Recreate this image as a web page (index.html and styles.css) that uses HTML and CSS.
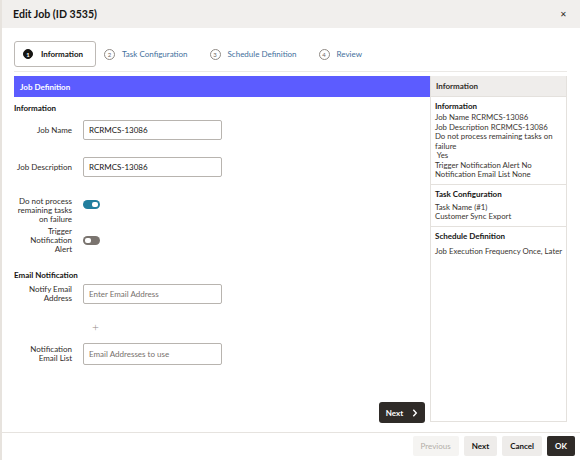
FILE: index.html
```html
<!DOCTYPE html>
<html>
<head>
<meta charset="utf-8">
<link rel="stylesheet" href="styles.css">
</head>
<body>
<div class="dialog">
  <header class="dlg-header">
    <h1 class="dlg-title">Edit Job (ID 3535)</h1>
    <span class="close">&#x2715;</span>
  </header>
  <div class="dlg-body">
    <nav class="train">
      <div class="step active"><span class="num">1</span><span class="step-label">Information</span></div>
      <div class="step"><span class="num">2</span><span class="step-label">Task Configuration</span></div>
      <div class="step"><span class="num">3</span><span class="step-label">Schedule Definition</span></div>
      <div class="step"><span class="num">4</span><span class="step-label">Review</span></div>
    </nav>
    <div class="content">
      <section class="main">
        <div class="bar">Job Definition</div>
        <div class="form">
          <div class="sub">Information</div>
          <div class="row row-input r1">
            <label class="lbl">Job Name</label>
            <div class="input">RCRMCS-13086</div>
          </div>
          <div class="row row-input r2">
            <label class="lbl">Job Description</label>
            <div class="input">RCRMCS-13086</div>
          </div>
          <div class="row row-toggle r3">
            <label class="lbl">Do not process remaining tasks on failure</label>
            <div class="toggle on"><span class="knob"></span></div>
          </div>
          <div class="row row-toggle r4">
            <label class="lbl">Trigger Notification Alert</label>
            <div class="toggle off"><span class="knob"></span></div>
          </div>
          <div class="sub sub2">Email Notification</div>
          <div class="row row-input r5">
            <label class="lbl">Notify Email Address</label>
            <div class="input ph">Enter Email Address</div>
          </div>
          <div class="row r6">
            <span></span>
            <span class="plus">+</span>
          </div>
          <div class="row row-input r7">
            <label class="lbl">Notification Email List</label>
            <div class="input ph tall">Email Addresses to use</div>
          </div>
        </div>
        <div class="actions">
          <button class="btn-next">Next
            <svg width="6" height="8" viewBox="0 0 6 8"><path d="M1.3 0.8 L4.3 4 L1.3 7.2" fill="none" stroke="#fff" stroke-width="1.4"/></svg>
          </button>
        </div>
      </section>
      <aside class="summary">
        <div class="sum-head">Information</div>
        <div class="sum-sec">
          <div class="sum-title">Information</div>
          <div class="sum-text">Job Name RCRMCS-13086<br>Job Description RCRMCS-13086<br>Do not process remaining tasks on failure<br>&nbsp;Yes<br>Trigger Notification Alert No<br>Notification Email List None</div>
        </div>
        <div class="sum-sec">
          <div class="sum-title">Task Configuration</div>
          <div class="sum-text">Task Name (#1)<br>Customer Sync Export</div>
        </div>
        <div class="sum-sec last">
          <div class="sum-title">Schedule Definition</div>
          <div class="sum-text">Job Execution Frequency Once, Later</div>
        </div>
      </aside>
    </div>
  </div>
  <footer class="dlg-footer">
    <button class="fbtn disabled">Previous</button>
    <button class="fbtn">Next</button>
    <button class="fbtn">Cancel</button>
    <button class="fbtn primary">OK</button>
  </footer>
</div>
</body>
</html>
```
FILE: styles.css
```css
* { box-sizing: border-box; }
html, body { margin: 0; padding: 0; }
body {
  font-family: Lato, "Noto Sans", sans-serif;
  color: #312d2a;
  background: #fff;
  width: 580px;
  height: 460px;
  overflow: hidden;
  font-size: 8px;
}
.dialog {
  display: flex;
  flex-direction: column;
  height: 460px;
  border-left: 2px solid #e7e3de;
}
.dlg-header {
  height: 28px;
  flex: none;
  background: #f1efed;
  display: flex;
  align-items: center;
  justify-content: space-between;
  padding: 0 13px 0 11px;
}
.dlg-title {
  margin: 0;
  font-size: 10.6px;
  font-weight: 700;
  color: #161513;
}
.close { font-size: 8px; color: #312d2a; }
.dlg-body {
  flex: 1;
  display: flex;
  flex-direction: column;
  padding: 13px 13px 10px 12px;
}
.train {
  display: flex;
  align-items: center;
  padding-bottom: 4px;
  border-bottom: 1px solid #ebe9e6;
}
.step {
  display: flex;
  align-items: center;
  height: 26px;
  padding: 0 11px 0 8px;
  gap: 7px;
  color: #3f6f9c;
  font-size: 8px;
  margin-right: 3px;
}
.step .num {
  width: 11px;
  height: 11px;
  border: 1px solid #8f8a85;
  border-radius: 50%;
  display: flex;
  align-items: center;
  justify-content: center;
  font-size: 6px;
  color: #6d6863;
}
.step.active {
  border: 1px solid #bdb9b5;
  border-radius: 3px;
  padding: 0 12px 0 8px;
  gap: 8px;
  color: #161513;
  font-weight: 700;
  margin-right: 0;
}
.step.active .num {
  width: 10px;
  height: 10px;
  background: #161513;
  border-color: #161513;
  color: #fff;
}
.content {
  flex: 1;
  display: flex;
  margin-top: 4px;
}
.main {
  flex: 1;
  display: flex;
  flex-direction: column;
}
.bar {
  height: 21px;
  background: #5c5cff;
  color: #fff;
  font-weight: 700;
  display: flex;
  align-items: center;
  padding-left: 6px;
}
.form { display: flex; flex-direction: column; }
.sub {
  font-weight: 700;
  line-height: 12px;
  margin-top: 5px;
  color: #161513;
}
.sub2 { margin-top: 15px; }
.row {
  display: grid;
  grid-template-columns: 58px 139px;
  column-gap: 11px;
  align-items: center;
}
.lbl {
  text-align: right;
  line-height: 9px;
  color: #312d2a;
}
.input {
  height: 20px;
  border: 1px solid #b8b4af;
  border-radius: 2px;
  display: flex;
  align-items: center;
  padding-left: 5px;
  color: #161513;
}
.input.tall { height: 22px; }
.input.ph { color: #77716c; }
.r1 { margin-top: 6px; }
.r2 { margin-top: 17px; }
.r3 { margin-top: 20px; align-items: start; }
.r4 { margin-top: 3px; }
.r5 { margin-top: 3px; }
.r6 { margin-top: 17px; }
.r7 { margin-top: 10px; }
.toggle {
  width: 17px;
  height: 9px;
  border-radius: 5px;
  position: relative;
}
.r3 .toggle { margin-top: 3px; }
.toggle.on { background: #227e9e; }
.toggle.off { background: #7a746f; }
.knob {
  position: absolute;
  top: 2px;
  width: 6px;
  height: 5px;
  border-radius: 2px;
  background: #fff;
}
.toggle.on .knob { right: 2px; }
.toggle.off .knob { left: 2px; }
.plus {
  font-size: 12px;
  line-height: 12px;
  color: #8f8a85;
  padding-left: 9px;
  font-weight: 300;
}
.actions {
  margin-top: auto;
  display: flex;
  justify-content: flex-end;
  padding-right: 5px;
}
.btn-next {
  height: 21px;
  width: 46px;
  background: #2f2b28;
  border: none;
  border-radius: 3px;
  color: #fff;
  font-family: inherit;
  font-size: 8px;
  font-weight: 700;
  display: flex;
  align-items: center;
  justify-content: center;
  gap: 9px;
  padding: 0;
  margin-bottom: -1px;
}
.summary {
  width: 137px;
  border: 1px solid #e4e1dd;
  border-top: none;
  display: flex;
  flex-direction: column;
  font-size: 7.8px;
}
.sum-head {
  height: 21px;
  background: #efedeb;
  font-weight: 700;
  font-size: 8px;
  display: flex;
  align-items: center;
  padding-left: 5px;
  border-bottom: 1px solid #e4e1dd;
}
.sum-sec {
  padding: 3px 3px 4px 4px;
  border-bottom: 1px solid #e4e1dd;
}
.sum-sec.last { border-bottom: none; }
.sum-title {
  font-weight: 700;
  font-size: 8px;
  line-height: 12px;
  color: #161513;
}
.sum-text {
  line-height: 9.5px;
  margin-top: 1px;
  color: #3a3632;
  white-space: normal;
}
.sum-sec + .sum-sec .sum-text { margin-top: 3px; }
.sum-sec.last .sum-text { margin-top: 5px; white-space: nowrap; }
.dlg-footer {
  flex: none;
  height: 28px;
  border-top: 1px solid #e6e3df;
  display: flex;
  justify-content: flex-end;
  align-items: flex-start;
  padding: 3px 5px 0 0;
  gap: 5px;
}
.fbtn {
  height: 20px;
  border: none;
  border-radius: 2px;
  background: #eeecea;
  color: #161513;
  font-family: inherit;
  font-size: 8px;
  font-weight: 700;
  padding: 0 8px;
}
.fbtn.disabled { background: #f5f4f2; color: #b3aea8; font-weight: 400; }
.fbtn.primary { background: #2f2b28; color: #fff; }
```
